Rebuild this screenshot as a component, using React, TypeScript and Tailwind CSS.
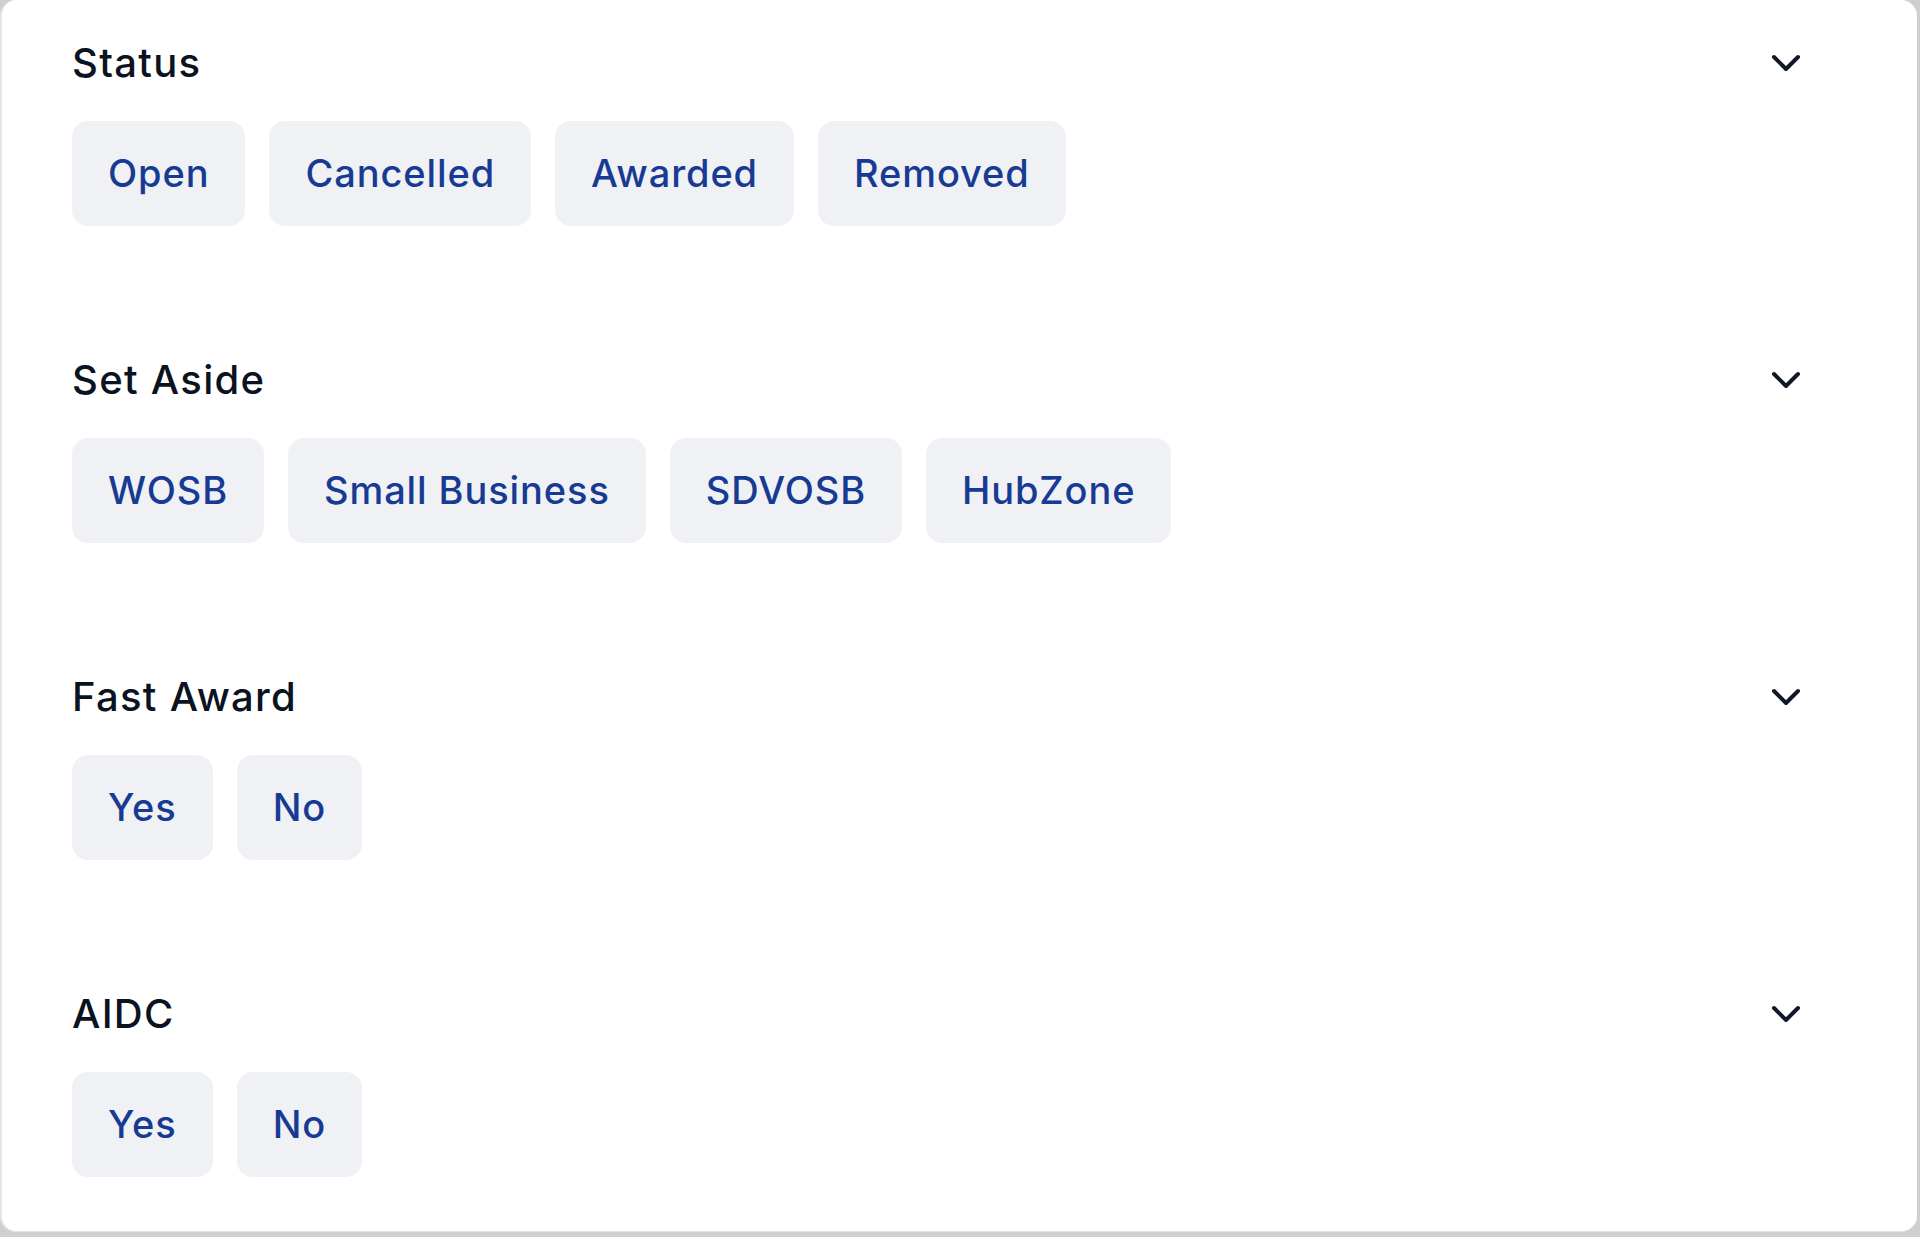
import { ChevronDown } from "lucide-react";

const sections = [
  { title: "Status", options: ["Open", "Cancelled", "Awarded", "Removed"] },
  { title: "Set Aside", options: ["WOSB", "Small Business", "SDVOSB", "HubZone"] },
  { title: "Fast Award", options: ["Yes", "No"] },
  { title: "AIDC", options: ["Yes", "No"] },
];

function FilterSection({ title, options }: { title: string; options: string[] }) {
  return (
    <section className="flex flex-col gap-[34px]">
      <div className="flex items-center justify-between pr-[107px]">
        <h2 className="text-[40px] leading-[48px] font-medium tracking-[1.3px] text-[#0b1220]">{title}</h2>
        <ChevronDown size={48} strokeWidth={2} className="text-[#111827]" />
      </div>
      <div className="flex flex-wrap gap-[24px]">
        {options.map((opt) => (
          <button
            key={opt}
            className="h-[105px] px-[36px] rounded-[16px] bg-[#eff1f5] text-[38px] font-medium tracking-[0.9px] text-[#173b92]"
          >
            {opt}
          </button>
        ))}
      </div>
    </section>
  );
}

export default function App() {
  return (
    <div className="w-[1920px] h-[1237px] bg-[#cfcfcf] font-['Inter',sans-serif]">
      <div className="w-[1917px] h-[1232px] bg-white rounded-[16px] border-l-2 border-b border-[#e3e5ea] pl-[70px] pt-[39px] flex flex-col gap-[130px]">
        {sections.map((s) => (
          <FilterSection key={s.title} title={s.title} options={s.options} />
        ))}
      </div>
    </div>
  );
}
